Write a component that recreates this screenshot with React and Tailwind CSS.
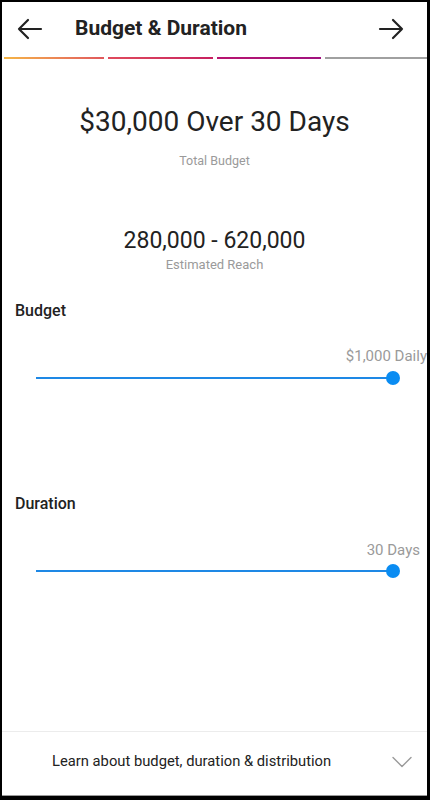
import React from 'react';

const ArrowLeft = () => (
    <svg width="26" height="22" viewBox="0 0 26 22" fill="none" stroke="#222" strokeWidth="2.2" strokeLinecap="round" strokeLinejoin="round">
        <path d="M24 11H2M11 2L2 11l9 9" />
    </svg>
);

const ArrowRight = () => (
    <svg width="26" height="22" viewBox="0 0 26 22" fill="none" stroke="#222" strokeWidth="2.2" strokeLinecap="round" strokeLinejoin="round">
        <path d="M2 11h22M15 2l9 9-9 9" />
    </svg>
);

const Slider = () => (
    <div className="flex items-center h-[16px] pl-[34px] pr-[27px]">
        <div className="flex-1 h-[2px] bg-[#1e88e5]" />
        <div className="w-[14px] h-[14px] rounded-full bg-[#0a8cf2] -ml-[6px]" />
    </div>
);

export default function App() {
    return (
        <div className="w-[430px] h-[800px] bg-black pt-[2px] pl-[2px] pr-[3px] pb-[4px]" style={{ fontFamily: 'Roboto, "Noto Sans", sans-serif' }}>
            <div className="h-full bg-white flex flex-col border-b border-[#9a9a9a]">
                {/* Header */}
                <div className="h-[55px] flex items-center pl-[15px] pr-[23px] pb-[1px]">
                    <ArrowLeft />
                    <h1 className="ml-[32px] text-[21px] font-bold text-[#222] flex-1">Budget &amp; Duration</h1>
                    <ArrowRight />
                </div>

                {/* Progress */}
                <div className="flex gap-[4px] pl-[2px] h-[2px]">
                    <div className="w-[100px] bg-gradient-to-r from-[#f5b543] to-[#e0575c]" />
                    <div className="w-[105px] bg-gradient-to-r from-[#e04a5c] to-[#c8205f]" />
                    <div className="w-[104px] bg-gradient-to-r from-[#b8136f] to-[#a0127f]" />
                    <div className="flex-1 bg-[#a0a0a0]" />
                </div>

                {/* Summary */}
                <div className="flex flex-col items-center mt-[46px]">
                    <div className="text-[28px] leading-[34px] text-[#222]">$30,000 Over 30 Days</div>
                    <div className="mt-[14px] text-[12.5px] leading-[16px] text-[#9a9a9a]">Total Budget</div>
                    <div className="mt-[58px] text-[23px] leading-[28px] text-[#222]">280,000 - 620,000</div>
                    <div className="mt-[2px] text-[13px] leading-[16px] text-[#9a9a9a]">Estimated Reach</div>
                </div>

                {/* Budget */}
                <div className="mt-[28px] pl-[13px] text-[16px] leading-[20px] font-medium text-[#222]">Budget</div>
                <div className="mt-[26px] flex justify-end overflow-hidden">
                    <span className="text-[15px] leading-[18px] text-[#9a9a9a] whitespace-nowrap">$1,000 Daily</span>
                </div>
                <div className="mt-[5px]">
                    <Slider />
                </div>

                {/* Duration */}
                <div className="mt-[108px] pl-[13px] text-[16px] leading-[20px] font-medium text-[#222]">Duration</div>
                <div className="mt-[27px] flex justify-end pr-[7px]">
                    <span className="text-[15px] leading-[18px] text-[#9a9a9a] whitespace-nowrap">30 Days</span>
                </div>
                <div className="mt-[4px]">
                    <Slider />
                </div>

                {/* Footer */}
                <div className="mt-auto h-[64px] border-t border-[#ececec] flex items-center pl-[50px] pr-[15px] pb-[4px]">
                    <span className="flex-1 text-[14.75px] text-[#222]">Learn about budget, duration &amp; distribution</span>
                    <svg width="20" height="12" viewBox="0 0 20 12" fill="none" stroke="#9a9a9a" strokeWidth="1.4" strokeLinecap="round" strokeLinejoin="round">
                        <path d="M1 1.5l9 9 9-9" />
                    </svg>
                </div>
            </div>
        </div>
    );
}
